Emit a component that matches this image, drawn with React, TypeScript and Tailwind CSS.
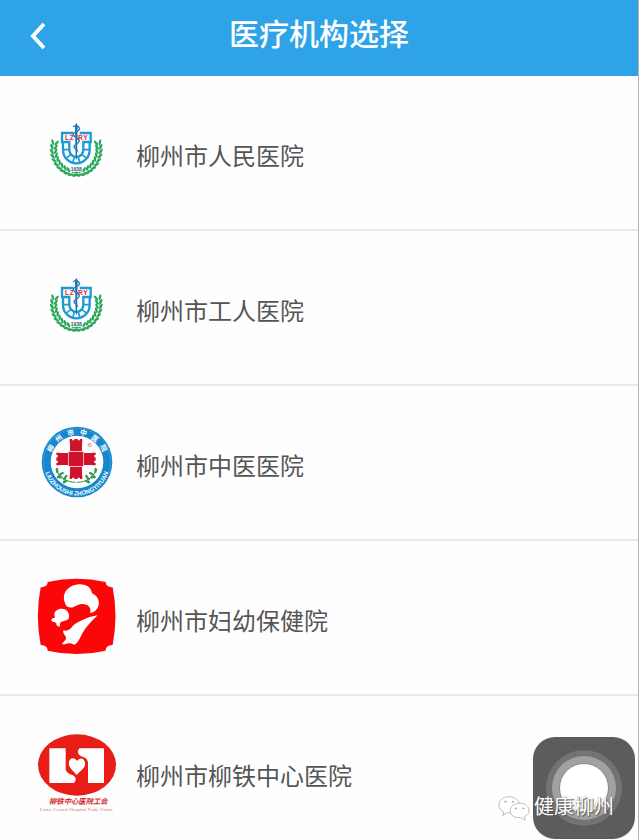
import type { ReactNode } from "react";

const leaves = Array.from({ length: 11 }, (_, i) => i);

function LaurelSide() {
  return (
    <g fill="#27a558">
      <path d="M69 104C64 150 88 184 124 193" fill="none" stroke="#27a558" strokeWidth="2" />
      {leaves.map((i) => {
        const a = ((194 - i * 10.5) * Math.PI) / 180;
        const x = 139 + Math.cos(a) * 68;
        const y = 119 + Math.sin(a) * 72;
        const turn = -76 - i * 9;
        return (
          <g key={i} transform={`translate(${x} ${y}) rotate(${turn})`}>
            <ellipse cx="4" cy="-6" rx="9" ry="3.6" transform="rotate(-28 4 -6)" />
            <ellipse cx="4" cy="6" rx="9" ry="3.6" transform="rotate(28 4 6)" />
          </g>
        );
      })}
    </g>
  );
}

function PeopleLogo() {
  return (
    <svg viewBox="18 9 240 240" className="size-20 shrink-0" aria-hidden="true">
      <LaurelSide />
      <g transform="translate(278 0) scale(-1 1)">
        <LaurelSide />
      </g>
      <g fill="none" stroke="#1c9ad6" strokeWidth="7">
        <path d="M130 69H96V96H118V120A21 21 0 0 0 160 120V96H182V69H149" />
        <path d="M99 94V120A40 40 0 0 0 179 120V94" />
        <path d="M98 119H117M161 119H180M107 146L122 134M128 159L133 142M150 159L145 142M171 146L156 134" strokeWidth="5" />
      </g>
      <path d="M135 46L139 39L143 46L141 140L139 152L137 140Z" fill="#1b6faa" />
      <path d="M129 50C138 44 148 50 149 57C145 67 129 64 130 73C131 84 149 82 148 93C146 104 132 101 132 110C133 119 144 117 143 125" fill="none" stroke="#267db5" strokeWidth="4" />
      <g fill="#df2535" fontSize="20" fontWeight="700" fontFamily="Liberation Sans, sans-serif">
        <text x="105" y="89">L</text>
        <text x="119" y="89">Z</text>
        <text x="144" y="89">R</text>
        <text x="160" y="89">Y</text>
      </g>
      <text x="139" y="184" textAnchor="middle" fill="#245b74" fontSize="15" fontWeight="700" fontFamily="Liberation Sans, sans-serif" stroke="#fff" strokeWidth="5" paintOrder="stroke">1938</text>
    </svg>
  );
}

function Tower() {
  return <path d="M-19 -26V-36H-12V-32H-5V-36H5V-32H12V-36H19V-26L18 -24V0H-18V-24Z" />;
}

function TcmLogo() {
  return (
    <svg viewBox="18 24 240 240" className="size-20 shrink-0" aria-hidden="true">
      <defs>
        <path id="tcm-bottom" d="M42 142A99 99 0 0 0 240 142" />
      </defs>
      <circle cx="141" cy="141" r="106" fill="#1687cd" />
      <circle cx="141" cy="141" r="101" fill="none" stroke="#54afe2" strokeWidth="1.5" />
      <circle cx="141" cy="141" r="79" fill="#fff" />
      <g fill="#fff" fontWeight="700">
        {["柳", "州", "市", "中", "医", "院"].map((c, i) => (
          <text
            key={c}
            fontSize="21"
            fontFamily="Noto Sans CJK SC, sans-serif"
            textAnchor="middle"
            transform={`rotate(${(i - 2.5) * 25} 141 141)`}
            x="141"
            y="59"
          >
            {c}
          </text>
        ))}
        <text fontSize="18" fontFamily="Liberation Sans, sans-serif" textAnchor="middle">
          <textPath href="#tcm-bottom" startOffset="50%">LIUZHOUSHI ZHONGYIYUAN</textPath>
        </text>
      </g>
      <g fill="none" stroke="#359a50" strokeWidth="7" strokeLinecap="round">
        <path d="M78 164C90 188 108 201 136 202M200 164C188 188 170 201 142 202" strokeWidth="3" />
        <path d="M82 171L81 162M88 180L98 174M94 187L84 186M102 193L109 183M109 198L101 202M196 171L197 162M190 180L180 174M184 187L194 186M176 193L169 183M169 198L177 202" />
      </g>
      <g fill="#d0122c" transform="translate(138 132)">
        <g transform="translate(0 -24)"><Tower /></g>
        <g transform="translate(0 24) rotate(180)"><Tower /></g>
        <g transform="translate(-23 0) rotate(-90)"><Tower /></g>
        <g transform="translate(23 0) rotate(90)"><Tower /></g>
        <rect x="-22" y="-22" width="44" height="44" stroke="#f7c9ce" strokeWidth="2" />
      </g>
      <circle cx="179" cy="90" r="5" fill="none" stroke="#e26a78" strokeWidth="2" />
      <path d="M177 93V87H180L178 90L181 93" fill="none" stroke="#e26a78" />
    </svg>
  );
}

function MaternityLogo() {
  return (
    <svg viewBox="18 24 240 240" className="size-20 shrink-0" aria-hidden="true">
      <path d="M53 36Q140 16 227 36C227 45 233 51 248 52Q265 137 248 225C233 226 227 232 227 242Q140 262 53 242C53 232 47 226 32 225Q15 137 32 52C47 51 53 45 53 36Z" fill="#fb0709" />
      <path d="M105 99C94 71 112 46 147 43C171 42 184 54 186 70C202 76 211 94 205 109C201 121 190 130 180 128C184 117 179 108 169 104C156 99 145 103 132 110C123 116 107 112 105 99Z" fill="#fff" />
      <path d="M73 134C73 121 89 112 104 118C114 122 120 134 116 146C108 154 97 151 91 158C88 164 93 168 87 170C79 168 79 162 79 159L64 153C63 146 68 144 75 143Z" fill="#fff" />
      <path d="M101 181C109 184 120 180 129 167C142 155 176 140 203 136C182 156 166 173 156 192C149 206 145 217 134 224C125 221 119 218 110 221C103 223 98 224 96 221C104 214 110 207 108 202C105 196 96 187 101 181Z" fill="#fff" />
    </svg>
  );
}

function RailwayLogo() {
  return (
    <svg viewBox="18 21 240 240" className="size-20 shrink-0" aria-hidden="true">
      <ellipse cx="141" cy="117" rx="117" ry="92" fill="#e71d16" />
      <path d="M58 67H107V128C108 139 117 143 127 147C137 152 141 160 132 171H58Z" fill="#fff" />
      <path d="M222 171H174V110C173 99 164 95 154 91C144 86 140 78 148 67H222Z" fill="#fff" />
      <path d="M141 105C132 90 113 97 117 117C120 130 132 136 140 147C149 136 162 130 165 117C168 98 151 90 141 105Z" fill="#fff" stroke="#e71d16" strokeWidth="7" paintOrder="stroke" />
      <text x="145" y="235" textAnchor="middle" fontSize="22" fontStyle="italic" fontWeight="700" fontFamily="Noto Sans CJK SC, sans-serif" fill="#d52b32">柳铁中心医院工会</text>
      <text x="139" y="254" textAnchor="middle" fontSize="15" fontFamily="Liberation Serif, serif" fill="#d87979">Liutie Central Hospital Trade Union</text>
    </svg>
  );
}

const hospitals: { name: string; logo: ReactNode }[] = [
  { name: "柳州市人民医院", logo: <PeopleLogo /> },
  { name: "柳州市工人医院", logo: <PeopleLogo /> },
  { name: "柳州市中医医院", logo: <TcmLogo /> },
  { name: "柳州市妇幼保健院", logo: <MaternityLogo /> },
  { name: "柳州市柳铁中心医院", logo: <RailwayLogo /> },
];

function Watermark() {
  return (
    <div className="pointer-events-none absolute right-6 bottom-4 flex items-center gap-1">
      <svg viewBox="0 0 34 28" className="h-7 w-8" fill="#fff" stroke="#aaa" strokeWidth="0.8" aria-hidden="true">
        <path d="M12 2C5 2 1 6 1 11C1 14 3 17 6 18L5 22L10 19C18 20 23 16 23 11C23 6 18 2 12 2Z" />
        <path d="M23 9C17 9 13 12 13 17C13 22 18 25 24 24L29 27L28 23C31 22 33 20 33 17C33 12 29 9 23 9Z" />
        <path d="M7 8Q8 6 9 8M15 8Q16 6 17 8M18 15Q19 13 20 15M26 15Q27 13 28 15" fill="none" strokeWidth="1.2" />
      </svg>
      <span className="pb-1 text-xl leading-7 text-white [text-shadow:1px_1px_1px_#555,0_0_1px_#777]">健康柳州</span>
    </div>
  );
}

export default function App() {
  return (
    <div className="relative h-screen overflow-hidden border-r border-[#b5b5b5] bg-[#fefefe] font-['Noto_Sans_CJK_SC',sans-serif]">
      <header className="grid h-19 grid-cols-[76px_1fr_76px] items-center bg-[#2fa3e7] pb-1 text-white">
        <button type="button" aria-label="返回" className="flex h-full items-center justify-center">
          <svg viewBox="0 0 16 28" className="h-7 w-4" fill="none" stroke="currentColor" strokeWidth="4" aria-hidden="true">
            <path d="M14 2L3 14L14 26" />
          </svg>
        </button>
        <h1 className="pb-2 text-center text-[30px] leading-10 font-medium">医疗机构选择</h1>
      </header>
      <main>
        <ul>
          {hospitals.map(({ name, logo }) => (
            <li key={name} className="border-b-2 border-[#e9e9e9]">
              <a href="#" className="flex h-[153px] items-center gap-5 px-9 text-2xl text-[#555]">
                {logo}
                <span className="pt-1">{name}</span>
              </a>
            </li>
          ))}
        </ul>
      </main>
      <button type="button" aria-label="辅助触控" className="absolute right-[3px] bottom-px flex size-[102px] items-center justify-center rounded-[22px] bg-[#5c5c5c]">
        <span className="flex size-[76px] items-center justify-center rounded-full bg-[#737373]">
          <span className="flex size-16 items-center justify-center rounded-full bg-[#a1a1a1]">
            <span className="size-[50px] rounded-full border border-[#888] bg-white" />
          </span>
        </span>
      </button>
      <Watermark />
    </div>
  );
}
